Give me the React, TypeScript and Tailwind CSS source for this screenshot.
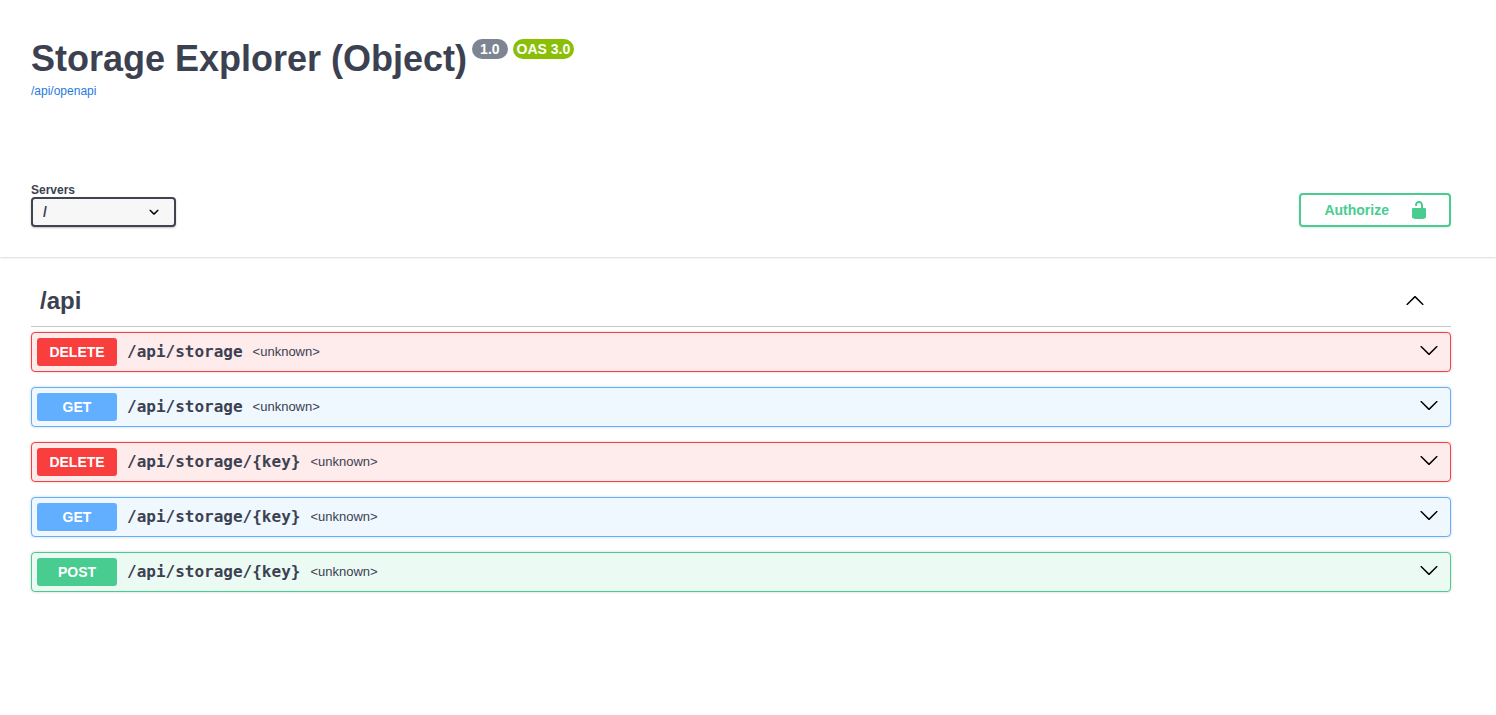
import { useState } from "react";

type Method = "DELETE" | "GET" | "POST";

const operations: { method: Method; path: string }[] = [
  { method: "DELETE", path: "/api/storage" },
  { method: "GET", path: "/api/storage" },
  { method: "DELETE", path: "/api/storage/{key}" },
  { method: "GET", path: "/api/storage/{key}" },
  { method: "POST", path: "/api/storage/{key}" },
];

const rowStyles: Record<Method, string> = {
  DELETE: "border-[#f93e3e] bg-[#feebeb]",
  GET: "border-[#61affe] bg-[#eff7ff]",
  POST: "border-[#49cc90] bg-[#ecfaf4]",
};

const badgeStyles: Record<Method, string> = {
  DELETE: "bg-[#f93e3e]",
  GET: "bg-[#61affe]",
  POST: "bg-[#49cc90]",
};

function ArrowDown() {
  return (
    <svg viewBox="0 0 20 20" className="size-5 fill-black" aria-hidden="true">
      <path d="M17.418 6.109c.272-.268.709-.268.979 0s.271.701 0 .969l-7.908 7.83c-.27.268-.707.268-.979 0l-7.908-7.83c-.27-.268-.27-.701 0-.969.271-.268.709-.268.979 0L10 13.25l7.418-7.141z" />
    </svg>
  );
}

function ArrowUp() {
  return (
    <svg viewBox="0 0 20 20" className="size-5 fill-black" aria-hidden="true">
      <path d="M17.418 14.908c.272.268.709.268.979 0s.271-.701 0-.969l-7.908-7.83c-.27-.268-.707-.268-.979 0l-7.908 7.83c-.27.268-.27.701 0 .969.271.268.709.268.979 0L10 7.767l7.418 7.141z" />
    </svg>
  );
}

function Operation({ method, path }: { method: Method; path: string }) {
  return (
    <li className={`rounded border shadow-[0_0_3px_rgba(0,0,0,0.19)] ${rowStyles[method]}`}>
      <button type="button" className="flex w-full items-center p-[5px] pr-[11px] text-left">
        <span className={`w-20 rounded-[3px] text-center text-sm leading-7 font-bold text-white ${badgeStyles[method]}`}>
          {method}
        </span>
        <span className="px-[10px] font-['DejaVu_Sans_Mono',monospace] text-base leading-5 font-bold">{path}</span>
        <span className="grow text-[13px] leading-5">&lt;unknown&gt;</span>
        <span className="pb-1">
          <ArrowDown />
        </span>
      </button>
    </li>
  );
}

export default function App() {
  const [open, setOpen] = useState(true);
  return (
    <div className="min-h-screen bg-white font-['Liberation_Sans',Arial,sans-serif] text-[#3b4151]">
      <header className="pt-9 pr-[45px] pb-12 pl-[31px]">
        <div className="flex items-start gap-[5px]">
          <h1 className="text-4xl leading-[46px] font-bold">Storage Explorer (Object)</h1>
          <span className="mt-[3px] rounded-full bg-[#7d8492] px-2 text-sm leading-5 font-bold text-white">1.0</span>
          <span className="mt-[3px] rounded-full bg-[#89bf04] px-1 text-sm leading-5 font-bold text-white">OAS 3.0</span>
        </div>
        <a href="/api/openapi" className="block w-fit text-xs leading-[18px] text-[#1f7ae0]">
          /api/openapi
        </a>
      </header>

      <section className="flex items-end justify-between bg-white pt-[35px] pr-[45px] pb-[30px] pl-[31px] shadow-[0_1px_2px_rgba(0,0,0,0.15)]">
        <div>
          <label htmlFor="servers" className="block text-xs leading-[14px] font-bold">
            Servers
          </label>
          <div className="grid w-[145px] items-center rounded border-2 border-[#41444e] bg-[#f7f7f7] shadow-[0_1px_2px_rgba(0,0,0,0.25)]">
            <select
              id="servers"
              className="col-start-1 row-start-1 h-[26px] w-full appearance-none bg-transparent pl-[10px] text-sm font-bold"
            >
              <option>/</option>
            </select>
            <svg
              viewBox="0 0 20 20"
              className="pointer-events-none col-start-1 row-start-1 mr-[10px] size-5 justify-self-end fill-black"
              aria-hidden="true"
            >
              <path d="M13.418 7.859c.271-.268.709-.268.978 0 .27.268.272.701 0 .969l-3.908 3.83c-.27.268-.707.268-.979 0l-3.908-3.83c-.27-.267-.27-.701 0-.969.271-.268.709-.268.978 0L10 11l3.418-3.141z" />
            </svg>
          </div>
        </div>
        <button
          type="button"
          className="flex items-center gap-5 rounded border-2 border-[#49cc90] py-[3px] pr-5 pl-[23px] text-sm leading-6 font-bold text-[#49cc90] shadow-[0_1px_2px_rgba(0,0,0,0.1)]"
        >
          Authorize
          <svg viewBox="0 0 20 20" className="size-5 fill-[#49cc90]" aria-hidden="true">
            <path d="M15.8 8H14V5.6C14 2.703 12.665 1 10 1 7.334 1 6 2.703 6 5.6V6h2v-.801C8 3.754 8.797 3 10 3c1.203 0 2 .754 2 2.199V8H4c-.553 0-1 .646-1 1.199V17c0 .549.428 1.139.951 1.307l1.197.387C5.672 18.861 6.55 19 7.1 19h5.8c.549 0 1.428-.139 1.951-.307l1.196-.387c.524-.167.953-.757.953-1.306V9.199C17 8.646 16.352 8 15.8 8z" />
          </svg>
        </button>
      </section>

      <main className="pt-[20px] pr-[45px] pb-10 pl-[31px]">
        <h2 className="border-b border-[#c4c6cb] text-2xl leading-[28px] font-bold">
          <button
            type="button"
            aria-expanded={open}
            onClick={() => setOpen(!open)}
            className="flex w-full items-center justify-between pt-[10px] pr-[26px] pb-[11px] pl-[9px] text-left"
          >
            /api
            <span className="pb-0.5">{open ? <ArrowUp /> : <ArrowDown />}</span>
          </button>
        </h2>
        {open && (
          <ul className="flex flex-col gap-[15px] pt-[5px]">
            {operations.map((op) => (
              <Operation key={op.method + op.path} {...op} />
            ))}
          </ul>
        )}
      </main>
    </div>
  );
}
